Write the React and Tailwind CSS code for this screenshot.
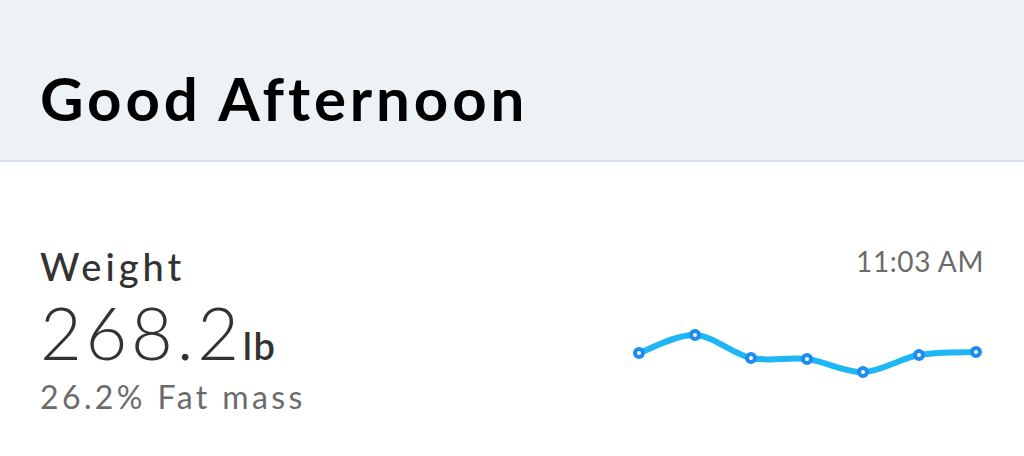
import React from "react";

const points = [
  [10, 28],
  [66, 10],
  [122, 33],
  [178, 34],
  [234, 47],
  [290, 30],
  [347, 27],
];

// smooth line through the points (catmull-rom -> bezier)
const smoothPath = (pts) => {
  let d = `M ${pts[0][0]} ${pts[0][1]}`;
  for (let i = 0; i < pts.length - 1; i++) {
    const p0 = pts[i - 1] || pts[i];
    const p1 = pts[i];
    const p2 = pts[i + 1];
    const p3 = pts[i + 2] || p2;
    const c1x = p1[0] + (p2[0] - p0[0]) / 6;
    const c1y = p1[1] + (p2[1] - p0[1]) / 6;
    const c2x = p2[0] - (p3[0] - p1[0]) / 6;
    const c2y = p2[1] - (p3[1] - p1[1]) / 6;
    d += ` C ${c1x} ${c1y} ${c2x} ${c2y} ${p2[0]} ${p2[1]}`;
  }
  return d;
};

const Sparkline = () => (
  <svg width="357" height="60" viewBox="0 0 357 60" className="block">
    <path d={smoothPath(points)} fill="none" stroke="#1fb6f6" strokeWidth="6" strokeLinecap="round" />
    {points.map(([x, y]) => (
      <circle key={x} cx={x} cy={y} r="4" fill="#fff" stroke="#1b8df0" strokeWidth="4" />
    ))}
  </svg>
);

export default function App() {
  return (
    <div className="w-[1024px] h-[456px] bg-white font-['Lato',sans-serif] overflow-hidden">
      <div className="h-[162px] bg-[#edf2f7] border-b-2 border-[#d9e0e8] pl-[40px] pt-[68px]">
        <h1 className="text-[60px] leading-none font-bold text-black tracking-[3.9px]">Good Afternoon</h1>
      </div>

      <div className="flex justify-between px-[40px] pt-[85px]">
        <div className="flex flex-col">
          <div className="text-[38px] leading-none font-medium text-[#333] tracking-[4px]">Weight</div>
          <div className="mt-[11px] flex items-baseline text-[#333]">
            <span className="text-[72px] leading-none font-light tracking-[3.8px]">268.2</span>
            <span className="text-[38px] leading-none font-semibold tracking-[1.5px]">lb</span>
          </div>
          <div className="mt-[13px] text-[32px] leading-none text-[#6b6b6b] tracking-[3.4px]">26.2% Fat mass</div>
        </div>

        <div className="flex flex-col items-end">
          <div className="text-[28px] leading-none text-[#6b6b6b] tracking-[0.6px]">11:03 AM</div>
          <div className="mt-[50px] -mr-[2px]">
            <Sparkline />
          </div>
        </div>
      </div>
    </div>
  );
}
